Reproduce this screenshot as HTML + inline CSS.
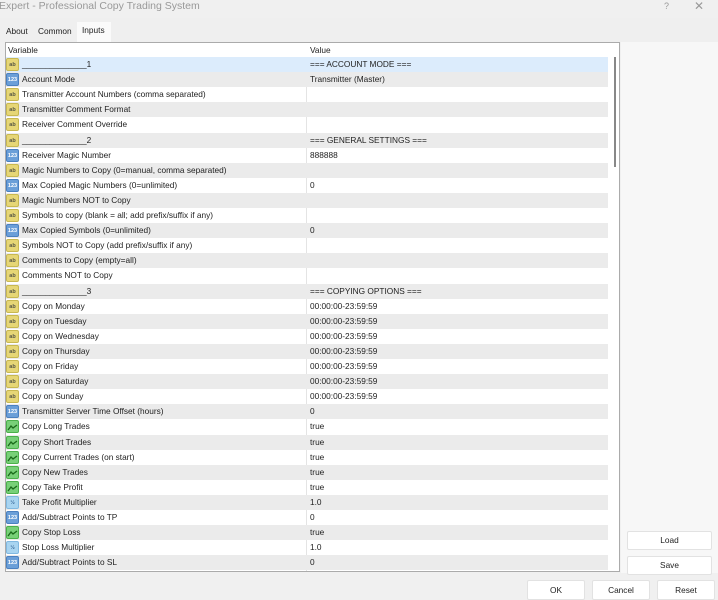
<!DOCTYPE html><html><head><style>
body{margin:0;width:718px;height:600px;background:#f0f0f0;font-family:"Liberation Sans",Arial,sans-serif;font-size:8.3px;color:#222;position:relative;overflow:hidden}
.abs{position:absolute}
.title{left:-1px;top:0;font-size:10.5px;color:#999}
.tab{top:26px;font-size:8.3px;color:#222}
.tabsel{left:77px;top:22px;width:34px;height:20px;background:#fafafa}
.grid{left:5px;top:42px;width:615px;height:530px;background:#fff;border:1px solid #ababab;box-sizing:border-box;overflow:hidden}
.hdr{position:absolute;left:0;top:0;width:602px;height:14px;background:#fff;border-bottom:1px solid #ddd}
.row{position:absolute;left:0;width:602px;height:15.1px;line-height:15px}
.row.g{background:#ebebeb}.row.s{background:#dcecfc}
.row .n{position:absolute;left:16px;top:0;white-space:nowrap}
.row .v{position:absolute;left:304px;top:0;white-space:nowrap}
.ic{position:absolute;left:0px;top:1px;width:13px;height:13px;border-radius:2px;font-size:5.5px;line-height:12px;text-align:center;font-weight:bold}
.ab{background:#e6d676;color:#554;border:1px solid #c8b850;box-sizing:border-box}
.n1{background:#6b9fd8;color:#fff;border:1px solid #4a80c0;box-sizing:border-box}
.bo{background:#78d078;border:1px solid #4ab04a;box-sizing:border-box}
.dv{background:#a8d4f0;color:#3a6a9a;border:1px solid #80b8e0;box-sizing:border-box}
.vline{position:absolute;left:300px;top:0;width:1px;height:530px;background:#e4e4e4}
.sb{position:absolute;left:603px;top:0;width:12px;height:530px;background:#fff}
.thumb{position:absolute;left:608px;top:14px;width:2px;height:110px;background:#888}
.btn{position:absolute;background:#fff;border:1px solid #e2e2e2;box-sizing:border-box;text-align:center;font-size:8.3px;color:#222;border-radius:2px}
</style></head><body>
<div class="abs title">Expert - Professional Copy Trading System</div>
<div class="abs" style="left:664px;top:1px;font-size:9px;color:#999">?</div>
<div class="abs" style="left:694px;top:-1px;font-size:12px;color:#999">✕</div>
<div class="abs" style="left:0;top:18px;width:718px;height:24px;background:#efefef"></div>
<div class="abs tabsel"></div>
<div class="abs tab" style="left:6px">About</div>
<div class="abs tab" style="left:38px">Common</div>
<div class="abs tab" style="left:82px;top:25px">Inputs</div>
<div class="abs" style="left:621px;top:42px;width:97px;height:531px;background:#f7f7f7"></div>
<div class="abs grid">
<div class="vline"></div>
<div class="hdr"><span style="position:absolute;left:2px;top:2px">Variable</span><span style="position:absolute;left:304px;top:2px">Value</span></div>
<div id="rows"></div>
<div class="sb"></div><div class="thumb"></div>
</div>
<div class="btn" style="left:627px;top:531px;width:85px;height:19px;line-height:17px">Load</div>
<div class="btn" style="left:627px;top:556px;width:85px;height:19px;line-height:17px">Save</div>
<div class="btn" style="left:527px;top:580px;width:58px;height:20px;line-height:19px">OK</div>
<div class="btn" style="left:592px;top:580px;width:58px;height:20px;line-height:19px">Cancel</div>
<div class="btn" style="left:657px;top:580px;width:58px;height:20px;line-height:19px">Reset</div>
<script>
var R=[["ab","______________1","=== ACCOUNT MODE ==="],["n1","Account Mode","Transmitter (Master)"],["ab","Transmitter Account Numbers (comma separated)",""],["ab","Transmitter Comment Format",""],["ab","Receiver Comment Override",""],["ab","______________2","=== GENERAL SETTINGS ==="],["n1","Receiver Magic Number","888888"],["ab","Magic Numbers to Copy (0=manual, comma separated)",""],["n1","Max Copied Magic Numbers (0=unlimited)","0"],["ab","Magic Numbers NOT to Copy",""],["ab","Symbols to copy (blank = all; add prefix/suffix if any)",""],["n1","Max Copied Symbols (0=unlimited)","0"],["ab","Symbols NOT to Copy (add prefix/suffix if any)",""],["ab","Comments to Copy (empty=all)",""],["ab","Comments NOT to Copy",""],["ab","______________3","=== COPYING OPTIONS ==="]];
["Monday","Tuesday","Wednesday","Thursday","Friday","Saturday","Sunday"].forEach(function(d){R.push(["ab","Copy on "+d,"00:00:00-23:59:59"])});
R=R.concat([["n1","Transmitter Server Time Offset (hours)","0"],["bo","Copy Long Trades","true"],["bo","Copy Short Trades","true"],["bo","Copy Current Trades (on start)","true"],["bo","Copy New Trades","true"],["bo","Copy Take Profit","true"],["dv","Take Profit Multiplier","1.0"],["n1","Add/Subtract Points to TP","0"],["bo","Copy Stop Loss","true"],["dv","Stop Loss Multiplier","1.0"],["n1","Add/Subtract Points to SL","0"],["bo","",""]]);
var lab={ab:"ab",n1:"123",bo:"",dv:"½"},h="";
R.forEach(function(r,i){var c=i==0?"s":(i%2?"g":"");
var ic=r[0]=="bo"?'<svg width="11" height="11" style="margin-top:0px"><path d="M1 9 L4 5 L6 7 L10 4" stroke="#1a6a1a" fill="none" stroke-width="1.3"/></svg>':lab[r[0]];
h+='<div class="row '+c+'" style="top:'+(14+i*15.1)+'px"><div class="ic '+r[0]+'">'+ic+'</div><span class="n">'+r[1]+'</span><span class="v">'+r[2]+'</span></div>'});
document.getElementById("rows").innerHTML=h;
</script>
</body></html>
